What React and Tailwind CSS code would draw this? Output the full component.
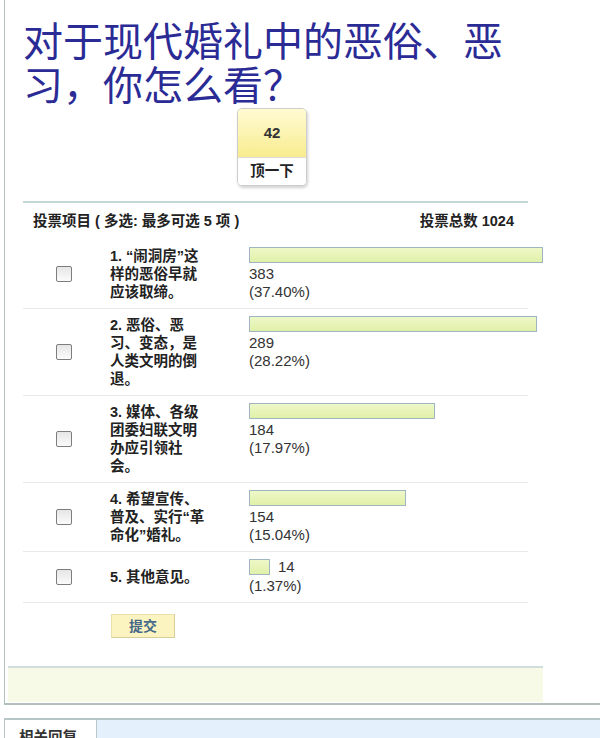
import React from 'react'

const FONT = { fontFamily: '"Liberation Sans", "Noto Sans CJK SC", sans-serif' }

const items = [
  { lines: ['1. “闹洞房”这', '样的恶俗早就', '应该取缔。'], count: 383, pct: '37.40%', w: 294 },
  { lines: ['2. 恶俗、恶', '习、变态，是', '人类文明的倒', '退。'], count: 289, pct: '28.22%', w: 288 },
  { lines: ['3. 媒体、各级', '团委妇联文明', '办应引领社', '会。'], count: 184, pct: '17.97%', w: 186 },
  { lines: ['4. 希望宣传、', '普及、实行“革', '命化”婚礼。'], count: 154, pct: '15.04%', w: 157 },
  { lines: ['5. 其他意见。'], count: 14, pct: '1.37%', w: 21, inline: true },
]

function Checkbox() {
  return <span className="block w-[16px] h-[16px] border border-[#7d7d7d] rounded-[2px] bg-gradient-to-b from-[#e6e6e6] to-[#fbfbfb]" />
}

function Bar({ w }) {
  return (
    <span
      className="inline-block h-[16px] border border-[#9fb6c2] bg-gradient-to-b from-[#eef8c8] to-[#e0f0a8] align-top"
      style={{ width: w }}
    />
  )
}

export default function App() {
  return (
    <div className="min-h-[738px] bg-white overflow-hidden text-[#222]" style={FONT}>
      <div className="ml-[4px] border-l border-b-2 border-[#b3c0c0] pb-[1px]">
        {/* title */}
        <h1 className="pl-[18px] pt-[20px] w-[530px] text-[40px] leading-[44px] text-[#2b2b96] font-normal">
          对于现代婚礼中的恶俗、恶习，你怎么看？
        </h1>

        {/* digg box */}
        <div className="ml-[232px] w-[70px] h-[78px] rounded-[5px] border border-[#cdcdcd] shadow-[1px_2px_3px_rgba(0,0,0,0.18)] overflow-hidden flex flex-col">
          <div className="h-[48px] bg-gradient-to-b from-[#fffbd2] to-[#f8ec8e] flex items-center justify-center text-[15px] font-bold text-[#333]">
            42
          </div>
          <div className="flex-1 bg-white border-t border-[#dedede] flex items-center justify-center text-[14.5px] font-bold text-[#222]">
            顶一下
          </div>
        </div>

        {/* poll */}
        <div className="ml-[3px] w-[535px]">
          <div className="mx-[15px] mt-[15px] border-t-2 border-[#c4d8d5]">
            <div className="h-[37px] flex items-center justify-between pl-[10px] pr-[14px] text-[14.5px] font-bold">
              <span>投票项目 ( 多选: 最多可选 5 项 )</span>
              <span>投票总数 1024</span>
            </div>
            {items.map((it, i) => (
              <div key={i} className="grid grid-cols-[87px_139px_1fr] py-[7px] border-b border-[#e6eaea]">
                <div className="flex items-center pl-[33px]">
                  <Checkbox />
                </div>
                <div className={`flex flex-col text-[14.5px] leading-[18px] font-semibold whitespace-nowrap ${it.inline ? 'justify-center' : ''}`}>
                  {it.lines.map((l) => (
                    <span key={l}>{l}</span>
                  ))}
                </div>
                <div className="flex flex-col text-[15px] leading-[18px] text-[#333] whitespace-nowrap">
                  {it.inline ? (
                    <div className="h-[18px] flex items-start gap-[8px]">
                      <Bar w={it.w} />
                      <span className="leading-[16px]">{it.count}</span>
                    </div>
                  ) : (
                    <>
                      <div className="h-[18px]">
                        <Bar w={it.w} />
                      </div>
                      <span>{it.count}</span>
                    </>
                  )}
                  <span>({it.pct})</span>
                </div>
              </div>
            ))}
          </div>

          <button className="ml-[103px] mt-[11px] w-[64px] h-[24px] bg-[#fbf4c0] border border-[#e9e0aa] border-b-[#d8cf98] border-r-[#d8cf98] text-[14px] font-bold text-[#46698a]">
            提交
          </button>

          <div className="mt-[28px] h-[36px] border-t-2 border-[#d0dddc] bg-[#f7fae7]" />
        </div>
      </div>

      {/* tabs */}
      <div className="ml-[4px] mt-[13px] border-t-2 border-l border-[#b6c6c6] flex h-[30px]">
        <div className="w-[92px] bg-white border-r border-[#bcc8c8] pl-[14px] pt-[8px] text-[14.5px] font-bold text-[#333] leading-[18px]">
          相关回复
        </div>
        <div className="flex-1 bg-[#e4f0fb]" />
      </div>
    </div>
  )
}
